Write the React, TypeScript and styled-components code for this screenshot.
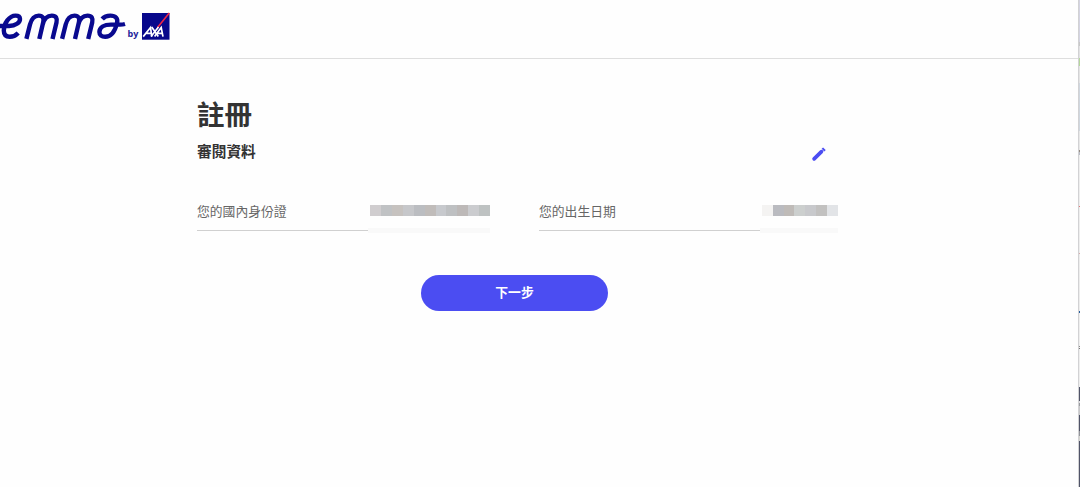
import React from "react";
import styled, { createGlobalStyle } from "styled-components";

const identityMask = [
  "#d0cdcf", "#c0c2c4", "#c6c2bf", "#c6c7ca", "#bbbdc1", "#c0bcba",
  "#c7c9cd", "#bec0c2", "#bdb9b8", "#cbcccf", "#bec2c2",
];
const birthMask = ["#f4f3f2", "#babbc0", "#bfbbb8", "#cccfce", "#c8c9cc", "#c2c1c0", "#e2e4e7"];

// colour and height of each slice at the window's right edge
const edge: [string, number][] = [
  ["#d4d4e2", 42], ["#c8c8c8", 4], ["#e2e2e4", 12], ["#b5d79b", 8],
  ["#e4e4e4", 17], ["#d0d7df", 48], ["#e8e8e8", 19], ["#958c84", 2],
  ["#b9bcc5", 3], ["#eeeeee", 51], ["#e27878", 1], ["#eeeeee", 46],
  ["#d8aaaa", 1], ["#ededed", 57], ["#245b9b", 2], ["#eeeeee", 33],
  ["#8a8a8a", 1], ["#eeeeee", 1], ["#777777", 1], ["#eeeeee", 38],
  ["#505468", 14], ["#d9d9dc", 2], ["#999ba0", 3], ["#c8c8ca", 9],
  ["#505468", 16], ["#92949a", 5], ["#d4d4d0", 5], ["#505468", 46],
];

const App = () => {
  return (
    <Window>
      <GlobalStyle />
      <Page>
        <Header>
          <Logo />
        </Header>
        <Main>
          <Title>註冊</Title>
          <SubHeader>
            <SubTitle>審閱資料</SubTitle>
            <EditButton aria-label="編輯">
              <svg width="18" height="18" viewBox="0 0 24 24" fill="none" stroke="#4b4df2" strokeWidth="5">
                <path d="M5.5 18.5L15.3 8.9" strokeLinecap="round" />
                <path d="M17.3 6.9L19.2 5" strokeLinecap="butt" />
              </svg>
            </EditButton>
          </SubHeader>
          <Fields>
            <Field label="您的國內身份證" colors={identityMask} fade={122} />
            <Field label="您的出生日期" colors={birthMask} fade={78} />
          </Fields>
          <NextButton>下一步</NextButton>
        </Main>
      </Page>
      <Edge>
        {edge.map(([color, height], i) => (
          <Slice key={i} $color={color} $height={height} />
        ))}
      </Edge>
    </Window>
  );
};

export default App;

type FieldProps = {
  label: string;
  colors: string[];
  fade: number;
};

const Field = ({ label, colors, fade }: FieldProps) => (
  <FieldBox>
    <FieldRow>
      <Label>{label}</Label>
      <Mask>
        {colors.map((color, i) => (
          <Block key={i} $color={color} />
        ))}
      </Mask>
    </FieldRow>
    <Underline>
      <Line />
      <Fade $width={fade} />
    </Underline>
  </FieldBox>
);

const emmaM =
  "M26.4 38.9L30 24.5C31.5 18.7 34.8 15.6 38.8 15.6C42.8 15.6 44.2 18.3 43.2 22.3L39.3 38.9M42.7 24.5C44.1 18.7 47.6 15.6 51.8 15.6C56 15.6 57.5 18.3 56.5 22.5L52.5 38.9";

const Logo = () => (
  <svg width="171" height="42" viewBox="0 0 171 42">
    <g fill="none" stroke="#09098f" strokeWidth="4.4" strokeLinejoin="round">
      <path d="M0 26H9C15.5 25.8 20.2 22.6 20 18.8C19.9 16.5 18.1 15.6 15.5 15.6C9.3 15.6 3.8 23.5 3.8 30.6C3.8 34.8 6.2 36.8 9.8 36.8C13 36.8 15.7 35.5 18.2 32.9" />
      <path d={emmaM} />
      <path d={emmaM} transform="translate(35.7 0)" />
      <path d="M102.2 19C104.2 16.6 107.2 15.6 110.3 15.6C115.7 15.6 118.2 18.6 117 23.2C115 31.2 111 36.8 105.2 36.8C101.6 36.8 99.4 35 99.4 32C99.4 27.3 104 24.6 111 24.6H120C122.2 24.6 123.2 24.5 125 24" />
    </g>
    <LogoText x="127.5" y="37">by</LogoText>
    <rect x="142" y="13" width="27.5" height="26.7" fill="#07078b" />
    <path d="M169.3 13L157.5 27.5" stroke="#ef2546" strokeWidth="1.6" />
    <g fill="none" stroke="#fff" strokeWidth="1.7">
      <path d="M143.2 36.6L150.5 27.5L151.8 36.6M146.5 33.4H151.5" />
      <path d="M151.7 27L158.3 36.6M151 36.6L158.5 27" />
      <path d="M154.6 36.6L161.2 27.5L163 36.6M157.6 33.4H162.2" />
    </g>
  </svg>
);

const GlobalStyle = createGlobalStyle`
  * {
    box-sizing: border-box;
  }
  body {
    margin: 0;
    overflow: hidden;
    background: #fefefe;
    font-family: "Noto Sans CJK TC", "Noto Sans", sans-serif;
  }
`;

const Window = styled.div`
  display: flex;
  height: 487px;
`;
const Page = styled.div`
  flex: 1;
`;
const Header = styled.header`
  height: 59px;
  border-bottom: 1px solid #dedede;
`;
const LogoText = styled.text`
  fill: #24249a;
  font: bold 9px "Open Sans", sans-serif;
`;
const Main = styled.main`
  width: 641px;
  margin-left: 197px;
  padding-top: 34px;
`;
const Title = styled.h1`
  margin: 0 0 1px;
  color: #333;
  font-size: 27.5px;
  font-weight: 700;
  line-height: 41px;
`;
const SubHeader = styled.div`
  display: flex;
  align-items: center;
  justify-content: space-between;
  height: 36px;
  padding-right: 10px;
`;
const SubTitle = styled.h2`
  margin: 0 0 4px;
  color: #333;
  font-size: 14.7px;
  font-weight: 700;
  line-height: 22px;
`;
const EditButton = styled.button`
  display: flex;
  margin-top: 2px;
  padding: 0;
  border: 0;
  background: none;
`;
const Fields = styled.div`
  display: grid;
  grid-template-columns: 293px 299px;
  column-gap: 49px;
  margin-top: 30px;
`;
const FieldBox = styled.div``;
const FieldRow = styled.div`
  display: flex;
  justify-content: space-between;
  height: 25px;
`;
const Label = styled.span`
  color: #666;
  font-size: 12.8px;
  line-height: 20px;
`;
const Mask = styled.div`
  display: flex;
  height: 11px;
  margin-top: 4px;
`;
const Block = styled.span<{ $color: string }>`
  width: 10.9px;
  background: ${(p) => p.$color};
`;
const Underline = styled.div`
  display: flex;
  height: 7px;
`;
const Line = styled.div`
  flex: 1;
  height: 1px;
  margin-top: 4px;
  background: #d0d0d0;
`;
const Fade = styled.div<{ $width: number }>`
  width: ${(p) => p.$width}px;
  height: 5px;
  margin-top: 2px;
  background: #f9f9f9;
`;
const NextButton = styled.button`
  display: block;
  width: 187px;
  height: 36px;
  margin: 42px 0 0 224px;
  padding: 0 0 3px;
  border: 0;
  border-radius: 18px;
  background: #4b4df2;
  color: #fff;
  font: 700 12.8px "Noto Sans CJK TC", sans-serif;
`;
const Edge = styled.aside`
  width: 2px;
  border-left: 1px solid #d2d2d4;
`;
const Slice = styled.div<{ $color: string; $height: number }>`
  height: ${(p) => p.$height}px;
  background: ${(p) => p.$color};
`;
